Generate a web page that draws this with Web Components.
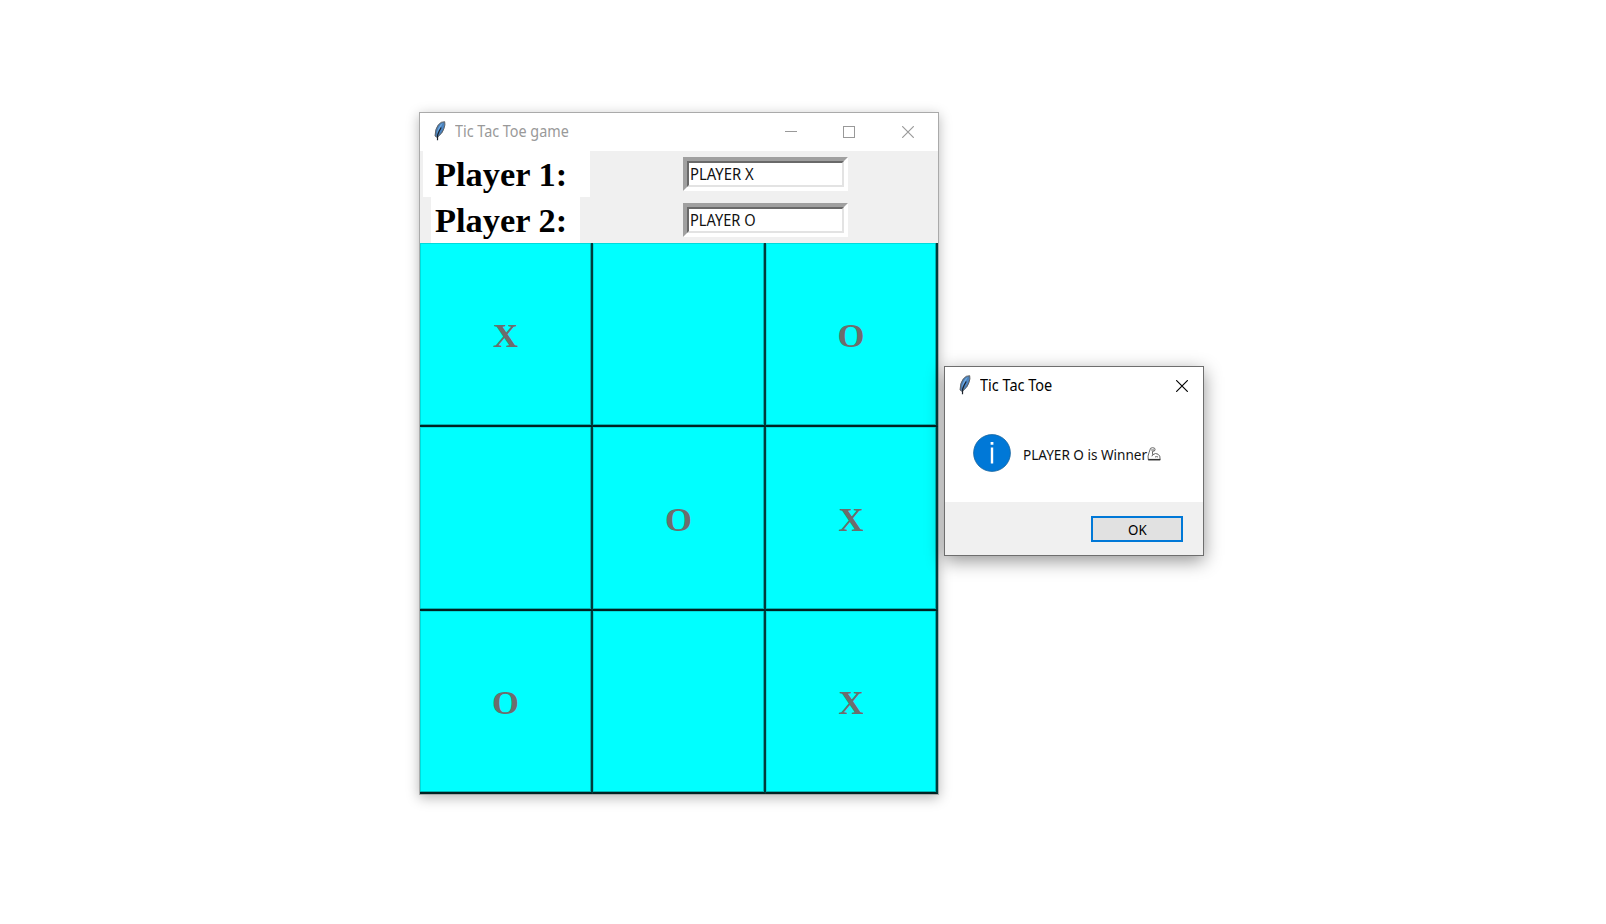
<!DOCTYPE html>
<html lang="en"><head><meta charset="utf-8"><title>Tic Tac Toe game</title>
<style>
html,body{margin:0;background:#fff}
body{width:1606px;height:924px;position:relative;overflow:hidden;font-family:"Noto Sans","Open Sans",sans-serif}
app-window{position:absolute}
#game{left:419px;top:112px;width:520px;height:683px;--edge:#aaa;--ink:#999;--shadow:0 3px 12px rgba(0,0,0,.28)}
#dialog{left:944px;top:366px;width:260px;height:190px;--edge:#6e6e6e;--ink:#000;--shadow:0 5px 17px rgba(0,0,0,.42)}
</style></head><body>
<app-window id="game" caption="Tic Tac Toe game" fit="114" controls="all">
  <player-row name="Player 1:" value="PLAYER X" fit="64" style="--l:3px;--w:167px;--p:12px"></player-row>
  <player-row name="Player 2:" value="PLAYER O" fit="66" style="--l:11px;--w:149px;--p:4px"></player-row>
  <game-board cells="X,,O,,O,X,O,,X"></game-board>
</app-window>
<app-window id="dialog" caption="Tic Tac Toe" fit="72" controls="close">
  <message-box></message-box>
</app-window>
<script>
class FitText extends HTMLElement{
  connectedCallback(){
    const r=this.attachShadow({mode:'open'});
    r.innerHTML='<style>:host{display:block;white-space:pre}span{display:inline-block;transform-origin:0 50%}</style><span><slot></slot></span>';
    const s=r.querySelector('span'),w=+this.getAttribute('width');
    this.style.width=w+'px';
    s.style.transform='scaleX('+w/s.offsetWidth+')';
  }
}
customElements.define('fit-text',FitText);

class AppWindow extends HTMLElement{
  constructor(){super();
    const all=this.getAttribute('controls')==='all';
    this.attachShadow({mode:'open'}).innerHTML=`<style>
    :host{display:flex;flex-direction:column;box-sizing:border-box;border:1px solid var(--edge);background:#fff;box-shadow:var(--shadow)}
    header{display:flex;height:38px;flex:none;align-items:center;color:var(--ink);font-size:15.5px;line-height:20px}
    header fit-text{margin-top:-2px}
    .feather{width:12px;height:20px;margin:-3px 9px 0 14px}
    nav{margin-left:auto;display:flex;height:100%}
    nav svg{width:12px;height:12px;margin:13px 0 0;fill:none;stroke:var(--ink)}
    nav svg+svg{margin-left:46px}
    nav svg:last-child{margin-right:${all?24:15}px}
    nav svg:nth-child(3){margin-left:47px}
    .body{flex:1;display:flex;flex-direction:column}
    </style><header>
    <svg class="feather" viewBox="0 0 12 20"><path d="M10.7.7Q7 .4 4.3 3.8 1.1 7.7 1 15l2.2 1.5Q9 12 10 7.5 11.5 3.5 10.7.7Z" fill="#4c7fb5" stroke="#5c5c5c" stroke-width=".9"/><path d="M9 2Q5 4 3.3 10L3 12.5 5.6 8Z" fill="#6ba9e4"/><path d="M9.8 3Q9.6 8 5 12.5L7 8Z" fill="#4e8bd0"/><path d="M7.2 6.5 5 10.5 3.6 14 3.5 19.3" fill="none" stroke="#1b222c" stroke-width="1.2"/></svg>
    <fit-text width="${this.getAttribute('fit')}">${this.getAttribute('caption')}</fit-text>
    <nav>${all?'<svg viewBox="0 0 12 12"><path d="M0 5.5h12"/></svg><svg viewBox="0 0 12 12"><rect x=".5" y=".5" width="11" height="11"/></svg>':''}<svg viewBox="0 0 12 12"><path d="M.2.2l11.6 11.6M11.8.2L.2 11.8" stroke-width="1.15"/></svg></nav>
    </header><div class="body"><slot></slot></div>`;
  }
}

class PlayerRow extends HTMLElement{
  constructor(){super();
    this.attachShadow({mode:'open'}).innerHTML=`<style>
    :host{display:flex;height:46px;background:#f0f0f0;flex:none}
    .name{box-sizing:border-box;margin-left:var(--l);width:var(--w);padding-left:var(--p);background:#fff;color:#000;font:bold 34.67px/47px "Liberation Serif",serif;height:46px}
    .field{box-sizing:border-box;width:165px;height:34px;margin:6px 90px 0 auto;border:4px solid;border-color:#a0a0a0 #fff #fff #a0a0a0}
    .inner{box-sizing:border-box;height:26px;border:2px solid;border-color:#696969 #e3e3e3 #e3e3e3 #696969;background:#fff;padding-left:1px;font-size:15.5px;line-height:22px;color:#111}
    </style><div class="name"><fit-text width="132">${this.getAttribute('name')}</fit-text></div>
    <div class="field"><div class="inner"><fit-text width="${this.getAttribute('fit')}">${this.getAttribute('value')}</fit-text></div></div>`;
  }
}

class GameBoard extends HTMLElement{
  constructor(){super();
    this.attachShadow({mode:'open'}).innerHTML=`<style>
    :host{display:grid;flex:1;grid-template-columns:173px 173px 172px;grid-template-rows:184px 184px 183px}
    div{box-sizing:border-box;display:flex;align-items:center;justify-content:center;background:#0ff;border-right:2px solid #003c3c;border-bottom:2px solid #002222;box-shadow:inset -1px -1px #00b4b4,inset 1px 1px #00dcdc;font:bold 34.67px/40px "Liberation Serif",serif;color:#6d6d6d;padding-top:1px}
    </style>${this.getAttribute('cells').split(',').map(c=>`<div>${c}</div>`).join('')}`;
  }
}

class MessageBox extends HTMLElement{
  constructor(){super();
    this.attachShadow({mode:'open'}).innerHTML=`<style>
    :host{display:flex;flex-direction:column;flex:1;color:#111}
    main{height:97px;display:flex;align-items:center}
    .info{width:38px;height:38px;margin:-1px 0 0 27.5px}
    fit-text{margin:2px 0 0 12.5px;font-size:14px;line-height:20px}
    .arm{width:14px;height:14px;margin-top:1px}
    footer{flex:1;background:#f0f0f0;display:flex}
    button{box-sizing:border-box;width:92px;height:26px;margin:14px 20px 0 auto;border:2px solid #0078d7;border-radius:0;background:#e1e1e1;padding:0;display:flex;justify-content:center;align-items:center;font:14px/20px "Noto Sans",sans-serif;color:#000}
    button fit-text{margin:1px 0 0}
    </style><main>
    <svg class="info" viewBox="0 0 38 38"><circle cx="19" cy="19" r="18.4" fill="#0078d7" stroke="#17649f" stroke-width=".8"/><path d="M17.8 13.5h2.4v16h-2.4zM17.6 8h2.8v2.8h-2.8z" fill="#fff"/></svg>
    <fit-text width="124">PLAYER O is Winner</fit-text>
    <svg class="arm" viewBox="0 0 14 14" fill="#fff" stroke="#666" stroke-width="1"><path d="M3.5 1.3Q5.5.1 7.6 1.2 8.6 2.7 7.4 4L5.4 4.4 5.7 7.8Q8.7 5.5 11 7.2 13.4 8.2 13.2 12.8H1.3Q.4 9 2.1 5.4Z"/><path d="M4.2 3h3M5.7 7.8l-.8 1.5M8 10q1.5-.8 3 0" fill="none"/><path d="M1.2 12.6h12" stroke="#333" stroke-width="1.4"/></svg>
    </main><footer><button><fit-text width="19">OK</fit-text></button></footer>`;
  }
}
customElements.define('app-window',AppWindow);
customElements.define('player-row',PlayerRow);
customElements.define('game-board',GameBoard);
customElements.define('message-box',MessageBox);
</script></body></html>
